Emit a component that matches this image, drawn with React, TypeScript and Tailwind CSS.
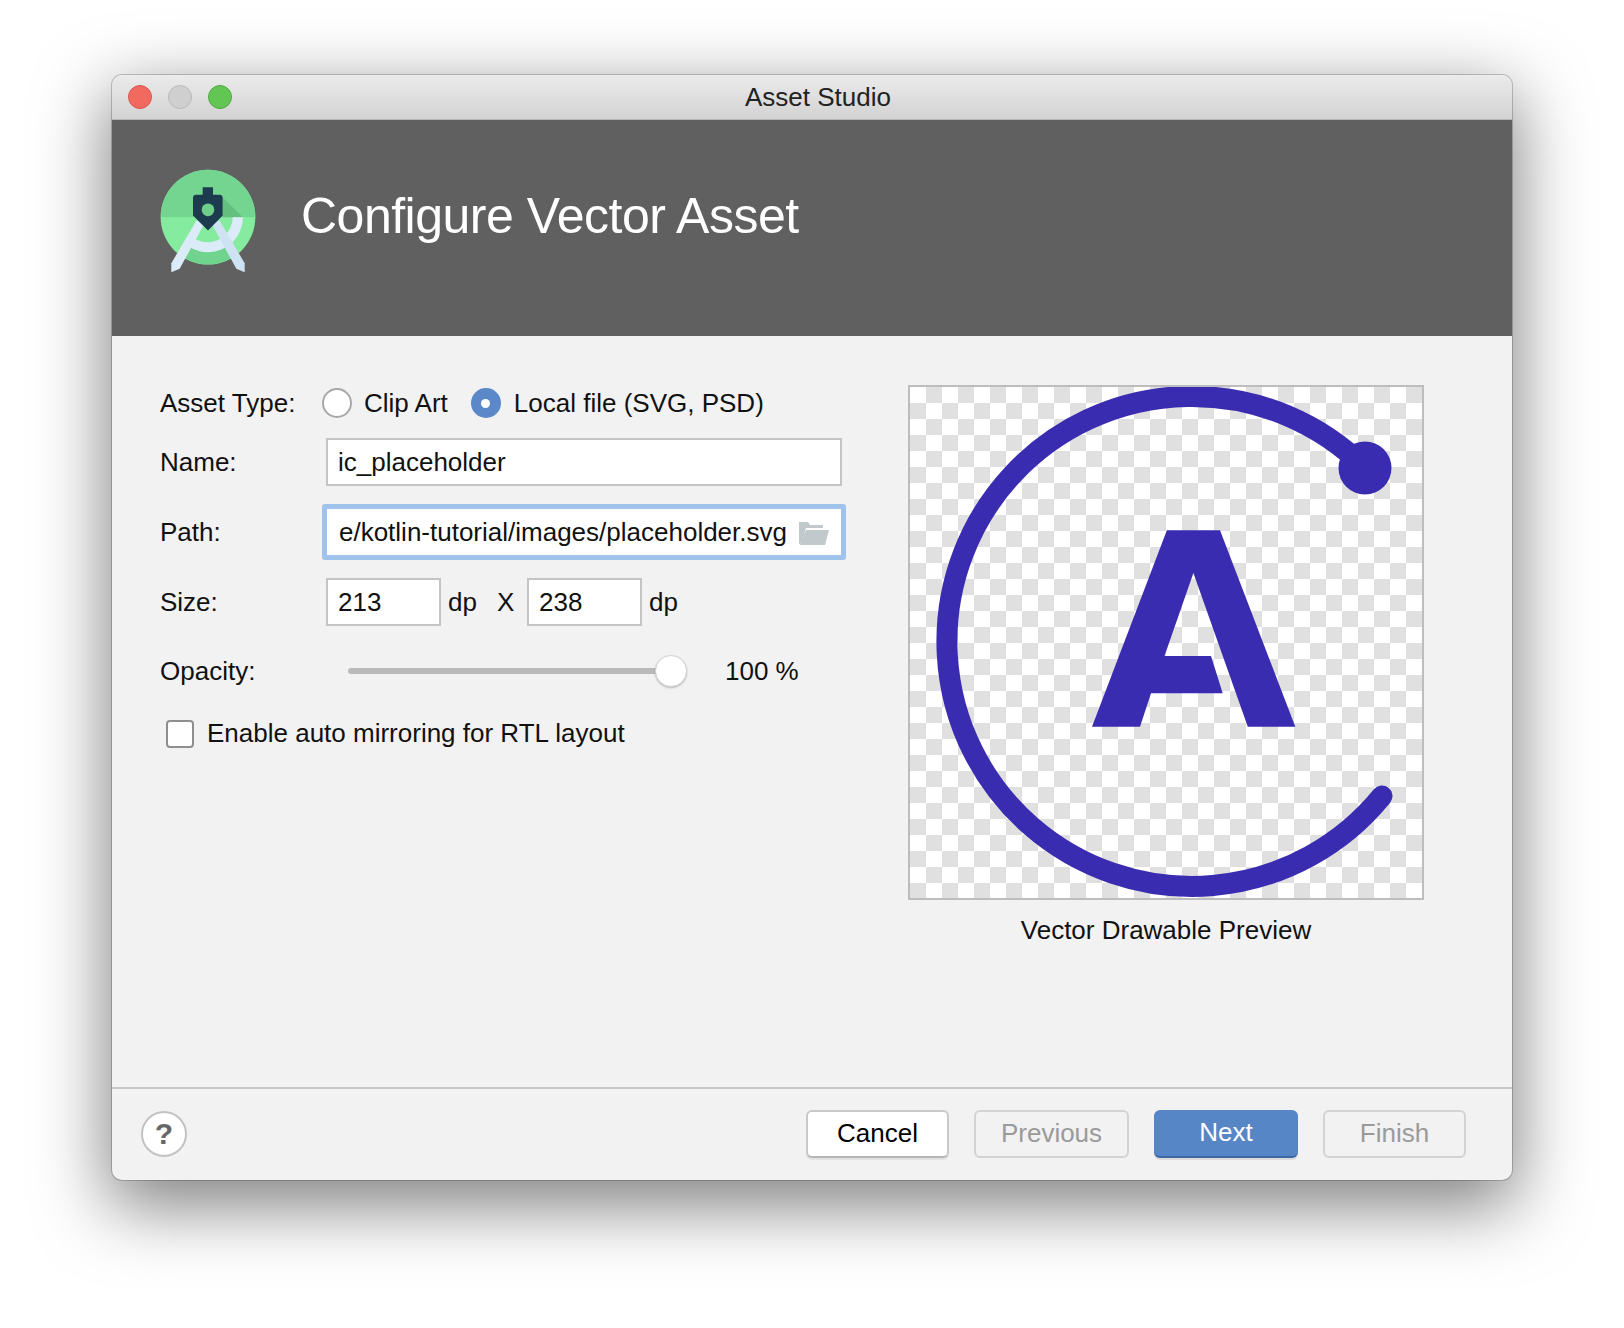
export default function App() {
  const btn = "w-[143px] h-[48px] rounded-[6px] flex items-center justify-center text-[26px]";
  return (
    <div className="w-[1624px] h-[1328px] bg-white pt-[75px] pl-[112px] overflow-hidden font-['Liberation_Sans',sans-serif] text-[26px] text-[#111]">
      <div className="w-[1400px] h-[1105px] rounded-[10px] overflow-hidden flex flex-col bg-[#f2f2f2] shadow-[0_22px_70px_4px_rgba(0,0,0,0.5),0_0_0_1px_rgba(0,0,0,0.2)]">
        <div className="h-[45px] shrink-0 flex items-center bg-gradient-to-b from-[#ebebeb] to-[#d3d3d3] border-b border-[#b8b8b8]">
          <div className="flex-1 flex gap-[16px] pl-[16px]">
            <div className="w-[24px] h-[24px] rounded-full bg-[#f1695f] border border-[#d9584f]" />
            <div className="w-[24px] h-[24px] rounded-full bg-[#cfcfcf] border border-[#b9b9b9]" />
            <div className="w-[24px] h-[24px] rounded-full bg-[#62c554] border border-[#51a845]" />
          </div>
          <div className="text-[#222] pr-[4px]">Asset Studio</div>
          <div className="flex-1" />
        </div>
        <div className="h-[216px] shrink-0 bg-[#606060] flex items-center pl-[48px]">
          <svg width="97" height="107" viewBox="180 320 291 320" className="shrink-0 -mt-[14px]">
            <circle cx="324" cy="467" r="142" fill="#85ec9f" />
            <path d="M182 467a142 142 0 0 1 284 0z" fill="#74d591" />
            <path d="M230 573a142 142 0 0 0 188 0l-30-20h-128z" fill="#70d48e" />
            <path d="M368 408l60 59h-60z" fill="#62bf7e" />
            <path d="M398 467h31a105 105 0 0 1-105 105a105 105 0 0 1-54-15l14-25a75 75 0 0 0 40 10a75 75 0 0 0 74-75z" fill="#dcebf8" />
            <path d="M290 476l22 12-73 134-25 10v-27z" fill="#dcebf8" />
            <path d="M358 476l-22 12 73 134 25 10v-27z" fill="#cfe2f2" />
            <path d="M308 377h31v23h19q10 0 10 10v52l-44 45-45-45v-52q0-10 10-10h19z" fill="#1d3b4f" />
            <circle cx="324" cy="445" r="19" fill="#6fcf8a" />
          </svg>
          <div className="ml-[44px] -mt-[24px] text-[50px] tracking-[-0.5px] text-white">Configure Vector Asset</div>
        </div>
        <div className="flex-1 flex pl-[48px] pt-[49px]">
          <div className="w-[748px] shrink-0 pt-[3px]">
            <div className="flex items-center h-[30px]">
              <div className="w-[162px]">Asset Type:</div>
              <div className="w-[30px] h-[30px] rounded-full bg-white border-2 border-[#a8a8a8]" />
              <div className="ml-[12px]">Clip Art</div>
              <div className="ml-[23px] w-[30px] h-[30px] rounded-full bg-[#5a88c8] flex items-center justify-center">
                <div className="w-[9px] h-[9px] rounded-full bg-white" />
              </div>
              <div className="ml-[13px]">Local file (SVG, PSD)</div>
            </div>
            <div className="flex items-center mt-[20px]">
              <div className="w-[166px]">Name:</div>
              <div className="w-[516px] h-[48px] bg-white border-2 border-[#c4c4c4] pl-[10px] flex items-center">ic_placeholder</div>
            </div>
            <div className="flex items-center mt-[18px]">
              <div className="w-[162px]">Path:</div>
              <div className="w-[524px] h-[56px] bg-white border-[5px] border-[#a0c3ec] rounded-[3px] flex items-center pl-[11px] pr-[10px]">
                <div className="w-[449px] overflow-hidden flex justify-end whitespace-nowrap">
                  <span className="shrink-0">e/kotlin-tutorial/images/placeholder.svg</span>
                </div>
                <svg width="30" height="23" viewBox="0 0 30 23" className="ml-[12px] shrink-0 mt-[3px]">
                  <path d="M0 0h9l2 3h13v3H7L3 21 0 22z" fill="#c2c9cc" />
                  <path d="M7 8h23l-4 15H1z" fill="#c2c9cc" />
                </svg>
              </div>
            </div>
            <div className="flex items-center mt-[18px]">
              <div className="w-[166px]">Size:</div>
              <div className="w-[115px] h-[48px] bg-white border-2 border-[#c4c4c4] pl-[10px] flex items-center">213</div>
              <div className="ml-[7px] w-[49px]">dp</div>
              <div className="w-[30px]">X</div>
              <div className="w-[115px] h-[48px] bg-white border-2 border-[#c4c4c4] pl-[10px] flex items-center">238</div>
              <div className="ml-[7px]">dp</div>
            </div>
            <div className="flex items-center mt-[29px] h-[32px]">
              <div className="w-[188px]">Opacity:</div>
              <div className="w-[322px] h-[6px] rounded-full bg-[#bababa]" />
              <div className="-ml-[15px] w-[32px] h-[32px] rounded-full bg-white border border-[#d4d4d4] shadow-[0_1px_2px_rgba(0,0,0,0.25)] shrink-0" />
              <div className="ml-[38px]">100 %</div>
            </div>
            <div className="flex items-center mt-[27px] pl-[6px]">
              <div className="w-[28px] h-[28px] rounded-[4px] bg-white border-2 border-[#8f8f8f]" />
              <div className="ml-[13px]">Enable auto mirroring for RTL layout</div>
            </div>
          </div>
          <div className="w-[516px] flex flex-col items-center">
            <div className="w-[516px] h-[515px] border-2 border-[#bdbdbd] bg-[conic-gradient(#e0e0e0_25%,#ffffff_0_50%,#e0e0e0_0_75%,#ffffff_0)] bg-[length:32px_32px]">
              <svg width="512" height="511" viewBox="2 2 512 511" className="block">
                <path d="M457 83A245 245 0 1 0 474 411" fill="none" stroke="#3a2cb0" strokeWidth="21" strokeLinecap="round" />
                <circle cx="457" cy="83" r="26.5" fill="#3a2cb0" />
                <path d="M258.900 145.300H312L387.300 341.700H339.800L285.400 188L256.500 271H303L314.700 308.300H243L232 341.700H184Z" fill="#3a2cb0" />
              </svg>
            </div>
            <div className="mt-[11px]">Vector Drawable Preview</div>
          </div>
        </div>
        <div className="h-[93px] shrink-0 border-t-2 border-[#c6c6c6] flex items-center pl-[29px] pr-[46px] pb-[2px]">
          <div className="w-[46px] h-[46px] rounded-full bg-white border-2 border-[#c2c2c2] flex items-center justify-center text-[30px] font-bold text-[#666]">?</div>
          <div className="flex-1" />
          <div className={btn + " bg-white border-2 border-[#c9c9c9] border-b-[#b5b5b5] text-black shadow-[0_2px_0_#e2e2e2]"}>Cancel</div>
          <div className={btn + " ml-[25px] !w-[155px] border-2 border-[#d3d3d3] text-[#9a9a9a]"}>Previous</div>
          <div className={btn + " ml-[25px] !w-[144px] bg-[#5786c6] border-b-2 border-[#3c66a6] text-white shadow-[0_2px_0_#dcdcdc]"}>Next</div>
          <div className={btn + " ml-[25px] border-2 border-[#d3d3d3] text-[#9a9a9a]"}>Finish</div>
        </div>
      </div>
    </div>
  );
}
